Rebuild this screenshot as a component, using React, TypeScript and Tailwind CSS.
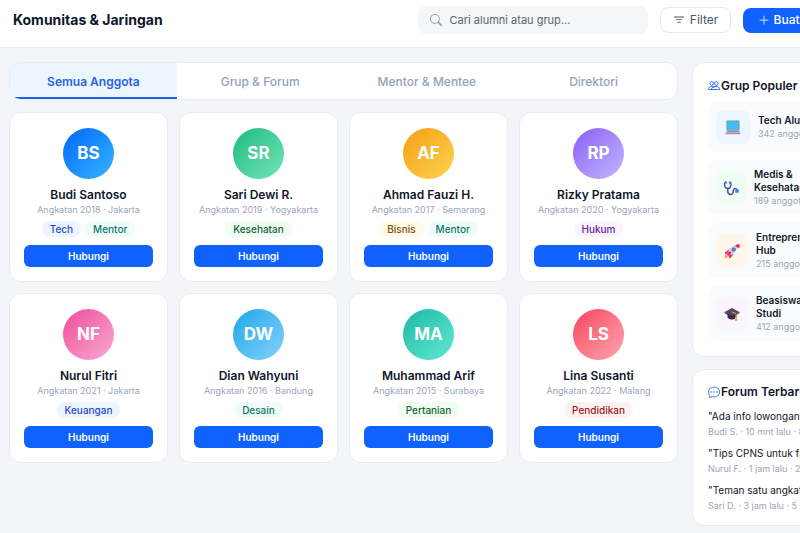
import * as React from "react";
import { BsChatDots, BsFilter, BsPlusLg, BsSearch } from "react-icons/bs";

const tabs = ["Semua Anggota", "Grup & Forum", "Mentor & Mentee", "Direktori"];

const tagStyles: Record<string, string> = {
  blue: "bg-[#edf4ff] text-[#1d4fc4]",
  teal: "bg-[#eefdf9] text-[#0f766e]",
  green: "bg-[#effdf3] text-[#166534]",
  yellow: "bg-[#fefbe6] text-[#854d0e]",
  purple: "bg-[#faf4ff] text-[#6b21a8]",
  red: "bg-[#fef1f1] text-[#991b1b]",
};

interface Member {
  initials: string;
  name: string;
  info: string;
  avatar: string;
  tags: { label: string; color: string }[];
}

const members: Member[] = [
  {
    initials: "BS",
    name: "Budi Santoso",
    info: "Angkatan 2018 · Jakarta",
    avatar: "from-[#0f62fe] to-[#38b6ff]",
    tags: [{ label: "Tech", color: "blue" }, { label: "Mentor", color: "teal" }],
  },
  {
    initials: "SR",
    name: "Sari Dewi R.",
    info: "Angkatan 2019 · Yogyakarta",
    avatar: "from-[#10b981] to-[#6ee7b7]",
    tags: [{ label: "Kesehatan", color: "green" }],
  },
  {
    initials: "AF",
    name: "Ahmad Fauzi H.",
    info: "Angkatan 2017 · Semarang",
    avatar: "from-[#f59e0b] to-[#fcd34d]",
    tags: [{ label: "Bisnis", color: "yellow" }, { label: "Mentor", color: "teal" }],
  },
  {
    initials: "RP",
    name: "Rizky Pratama",
    info: "Angkatan 2020 · Yogyakarta",
    avatar: "from-[#8b5cf6] to-[#c4b5fd]",
    tags: [{ label: "Hukum", color: "purple" }],
  },
  {
    initials: "NF",
    name: "Nurul Fitri",
    info: "Angkatan 2021 · Jakarta",
    avatar: "from-[#ec4899] to-[#f9a8d4]",
    tags: [{ label: "Keuangan", color: "blue" }],
  },
  {
    initials: "DW",
    name: "Dian Wahyuni",
    info: "Angkatan 2016 · Bandung",
    avatar: "from-[#0ea5e9] to-[#7dd3fc]",
    tags: [{ label: "Desain", color: "teal" }],
  },
  {
    initials: "MA",
    name: "Muhammad Arif",
    info: "Angkatan 2015 · Surabaya",
    avatar: "from-[#14b8a6] to-[#5eead4]",
    tags: [{ label: "Pertanian", color: "green" }],
  },
  {
    initials: "LS",
    name: "Lina Susanti",
    info: "Angkatan 2022 · Malang",
    avatar: "from-[#f43f5e] to-[#fda4af]",
    tags: [{ label: "Pendidikan", color: "red" }],
  },
];

const People = () => (
  <svg viewBox="0 0 24 24" className="size-3 text-[#2563eb]" fill="none" stroke="currentColor" strokeWidth="1.8" aria-hidden="true">
    <circle cx="7.500" cy="7" r="3.600" />
    <circle cx="16.500" cy="7" r="3.600" />
    <path d="M1 19c0-4 2.500-6 6.500-6 2.500 0 4.500 1 5.500 3M7 19c0-4 3-6 9-6 4.500 0 7 2 7 6z" strokeLinejoin="round" />
    <path d="M1 19h7" />
  </svg>
);

const Laptop = () => (
  <svg viewBox="0 0 32 32" className="size-4" aria-hidden="true">
    <defs>
      <linearGradient id="screen" x1="0" y1="0" x2="1" y2="1">
        <stop offset="0" stopColor="#27c4f5" />
        <stop offset="1" stopColor="#57b5f2" />
      </linearGradient>
    </defs>
    <rect x="3" y="3" width="26" height="20" rx="2" fill="#7d8ca6" />
    <rect x="4.500" y="4.500" width="23" height="17.500" fill="url(#screen)" />
    <path d="M4 22h24l3 6H1z" fill="#b9afc3" />
    <path d="M6 23.500h20l1 2H5z" fill="#8e8399" />
    <path d="M1 28h30v1.500a1 1 0 0 1-1 1H2a1 1 0 0 1-1-1z" fill="#a096aa" />
  </svg>
);

const Stethoscope = () => (
  <svg viewBox="0 0 32 32" className="size-4" fill="none" aria-hidden="true">
    <path d="M6 5H4.500C3 5 3 6 3 8c0 6 2 9 6.500 9S16 14 16 8c0-2 0-3-1.500-3H13" stroke="#4f5a9c" strokeWidth="3" strokeLinecap="round" />
    <path d="M9.500 17v5c0 9 11 9 11 1 0-7 7.500-8 7.500-1" stroke="#5a4a94" strokeWidth="3" strokeLinecap="round" />
    <path d="M5.500 3v4M13.500 3v4" stroke="#3f9be8" strokeWidth="3" strokeLinecap="round" />
    <circle cx="28" cy="22" r="4" fill="#338fe8" />
  </svg>
);

const Rocket = () => (
  <svg viewBox="0 0 32 32" className="size-4" aria-hidden="true">
    <path d="M3 22l5 6-6 3c-1-3 0-6 1-9z" fill="#f9a23b" />
    <path d="M10 13l-8 6c-1 2 0 3 1 3l7-2zM19 22l-6 8c-2 1-3 0-3-1l2-7z" fill="#e5255f" />
    <path d="M7 20C10 11 18 4 26 5c1 8-5 17-14 20z" fill="#cfc7dc" />
    <path d="M22 5c4-3 8-3 9-2s1 5-2 8z" fill="#e8295f" />
    <circle cx="19.500" cy="13" r="4" fill="#6a6488" />
    <circle cx="19.500" cy="13" r="2.500" fill="#4a8ff0" />
    <path d="M4 18l10-1-1 11-6-2z" fill="#f0447c" />
    <path d="M8 23l5-5" stroke="#a51d57" strokeWidth="2" />
  </svg>
);

const GraduationCap = () => (
  <svg viewBox="0 0 32 32" className="size-4" aria-hidden="true">
    <path d="M7 15v8c3 5 14 6 18 0v-8z" fill="#3a3146" />
    <path d="M1 12L16 4l15 8-15 9z" fill="#52475f" />
    <path d="M1 12v2l15 9 15-9v-2l-15 9z" fill="#2c2436" />
    <path d="M16 12l8 3v9" stroke="#ee9848" strokeWidth="2" fill="none" />
    <path d="M22 22h4l1 8h-5z" fill="#f3a65a" />
  </svg>
);

const groups = [
  { name: "Tech Alumni", count: "342 anggota", icon: <Laptop />, box: "w-[34px] bg-[#edf5ff]" },
  { name: "Medis & Kesehatan", count: "189 anggota", icon: <Stethoscope />, box: "w-[30px] bg-[#effdf4]" },
  { name: "Entrepreneur Hub", count: "215 anggota", icon: <Rocket />, box: "w-[32px] bg-[#fff7ec]" },
  { name: "Beasiswa & Studi", count: "412 anggota", icon: <GraduationCap />, box: "w-[32px] bg-[#faf5ff]" },
];

const topics = [
  { title: '"Ada info lowongan', meta: "Budi S. · 10 mnt lalu · 8 balasan" },
  { title: '"Tips CPNS untuk fresh', meta: "Nurul F. · 1 jam lalu · 24 balasan" },
  { title: '"Teman satu angkatan', meta: "Sari D. · 3 jam lalu · 5 balasan" },
];

const MemberCard: React.FC<{ member: Member }> = ({ member }) => (
  <article className="flex flex-col items-center rounded-xl border border-[#e8ecf2] bg-white px-3.5 pt-[15px] pb-3.5">
    <div
      className={`flex size-[51px] items-center justify-center rounded-full bg-linear-135 text-[17px] font-bold text-white ${member.avatar}`}
    >
      {member.initials}
    </div>
    <h2 className="mt-2 text-xs leading-4 font-semibold whitespace-nowrap text-[#0f172a]">{member.name}</h2>
    <p className="text-[9px] leading-[14px] whitespace-nowrap text-[#9aa5b8]">{member.info}</p>
    <div className="mt-1 flex gap-1">
      {member.tags.map((tag) => (
        <span key={tag.label} className={`rounded-full px-2 text-[10px] leading-4 font-medium ${tagStyles[tag.color]}`}>
          {tag.label}
        </span>
      ))}
    </div>
    <button className="mt-2 h-[22px] w-full rounded-md bg-[#0f62fe] text-[10px] font-semibold text-white hover:bg-blue-700">
      Hubungi
    </button>
  </article>
);

const App: React.FC = () => {
  const [active, setActive] = React.useState(0);

  return (
    <div className="min-h-screen overflow-hidden bg-[#f3f5f9] font-['Inter',sans-serif] text-[#0f172a]">
      <div className="w-[108%]">
        {/* Top bar */}
        <header className="flex items-center justify-between border-b border-[#e8ecf2] bg-white pt-1.5 pr-[18px] pb-[13px] pl-[13px]">
          <h1 className="text-sm font-bold">Komunitas & Jaringan</h1>
          <div className="flex items-center gap-3">
            <label className="flex h-7 w-[230px] items-center gap-2 rounded-lg bg-[#f4f6f8] px-3 text-[#8a94a3]">
              <BsSearch className="size-3" />
              <input
                type="text"
                aria-label="Cari alumni atau grup"
                placeholder="Cari alumni atau grup..."
                className="min-w-0 flex-1 text-[11px] outline-none placeholder:text-[#5b6472]"
              />
            </label>
            <button className="flex h-[26px] w-[71px] items-center justify-center gap-1 rounded-lg border border-[#e6eaf1] text-xs text-[#4b5563]">
              <BsFilter className="size-3.5" />
              Filter
            </button>
            <button className="flex h-[25px] items-center gap-1 rounded-lg bg-[#0f62fe] px-[15px] text-xs font-medium whitespace-nowrap text-white">
              <BsPlusLg className="size-3" />
              Buat Grup
            </button>
          </div>
        </header>

        <div className="flex items-start gap-3.5 px-[9px] pt-3.5">
          <main className="min-w-0 flex-1">
            <nav className="grid grid-cols-4 overflow-hidden rounded-xl border border-[#e8ecf2] bg-white">
              {tabs.map((tab, i) => (
                <button
                  key={tab}
                  onClick={() => setActive(i)}
                  className={`h-9 border-b-2 pt-[3px] text-xs ${
                    i === active
                      ? "border-[#1d5fe0] bg-[#edf5ff] font-semibold text-[#2563eb]"
                      : "border-transparent font-medium text-[#94a3b8]"
                  }`}
                >
                  {tab}
                </button>
              ))}
            </nav>

            <div className="mt-3 grid grid-cols-4 gap-[11px]">
              {members.map((member) => (
                <MemberCard key={member.name} member={member} />
              ))}
            </div>
          </main>

          {/* Sidebar */}
          <aside className="flex w-[163px] shrink-0 flex-col gap-3">
            <section className="rounded-xl border border-[#e8ecf2] bg-white px-[15px] pt-[15px] pb-[15px]">
              <h2 className="flex items-center gap-px text-xs leading-4 font-semibold whitespace-nowrap">
                <People />
                Grup Populer
              </h2>
              <ul className="mt-2 flex flex-col gap-2">
                {groups.map((group) => (
                  <li key={group.name} className="flex items-center gap-2 rounded-[10px] bg-[#fafbfd] p-2">
                    <span className={`flex h-[34px] shrink-0 items-center justify-center rounded-lg ${group.box}`}>
                      {group.icon}
                    </span>
                    <div className="min-w-0">
                      <p className="text-[10px] leading-[13px] font-semibold">{group.name}</p>
                      <p className="text-[9px] leading-[13px] whitespace-nowrap text-[#9aa5b8]">{group.count}</p>
                    </div>
                  </li>
                ))}
              </ul>
            </section>

            <section className="rounded-xl border border-[#e8ecf2] bg-white px-[15px] pt-3.5 pb-3">
              <h2 className="flex items-center gap-px text-xs leading-4 font-semibold whitespace-nowrap">
                <BsChatDots className="size-3 text-[#2563eb]" />
                Forum Terbaru
              </h2>
              <ul className="mt-2 flex flex-col gap-1.5">
                {topics.map((topic) => (
                  <li key={topic.title} className="whitespace-nowrap">
                    <p className="text-[10px] leading-4">{topic.title}</p>
                    <p className="text-[9px] leading-[15px] text-[#9aa5b8]">{topic.meta}</p>
                  </li>
                ))}
              </ul>
            </section>
          </aside>
        </div>
      </div>
    </div>
  );
};

export default App;
